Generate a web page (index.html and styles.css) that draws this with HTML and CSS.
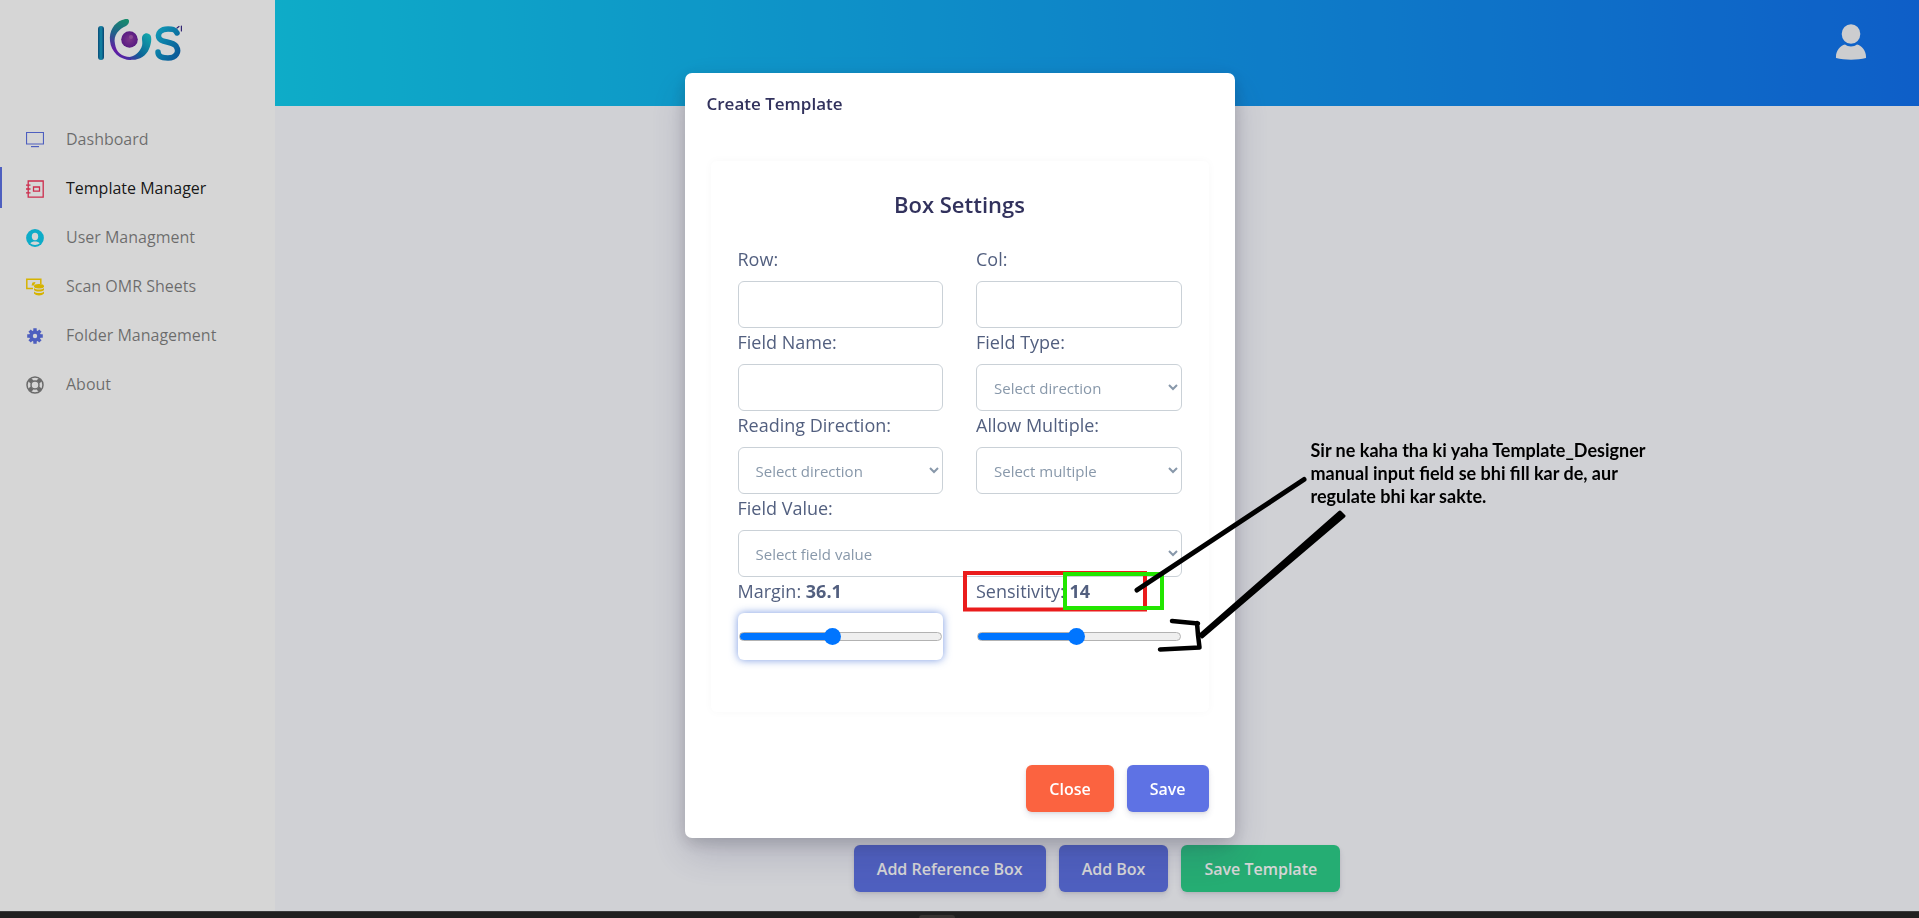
FILE: index.html
```html
<!DOCTYPE html>
<html lang="en">
<head>
<meta charset="utf-8">
<title>Template Manager</title>
<link rel="stylesheet" href="styles.css">
</head>
<body>
<div class="app">
  <aside class="sidebar">
    <a class="brand" href="#" aria-label="IOS home">
      <svg width="88" height="50" viewBox="0 0 88 50" fill="none" stroke-linecap="round">
        <defs>
          <linearGradient id="bar" x1="0" x2="1" y1="0" y2="0"><stop offset="0" stop-color="#0b5a8e"/><stop offset=".5" stop-color="#18a3c9"/><stop offset="1" stop-color="#0a4f86"/></linearGradient>
          <linearGradient id="ess" x1="0" x2="1" y1="0" y2="1"><stop offset="0" stop-color="#14b4d8"/><stop offset=".5" stop-color="#0e8ec4"/><stop offset="1" stop-color="#0d68b4"/></linearGradient>
          <linearGradient id="arcl" x1=".6" x2=".4" y1="0" y2="1"><stop offset="0" stop-color="#1ba682"/><stop offset=".4" stop-color="#2675a5"/><stop offset=".8" stop-color="#7820c4"/><stop offset="1" stop-color="#4b3cc4"/></linearGradient>
          <linearGradient id="arcr" x1="1" x2="0" y1="0" y2="1"><stop offset="0" stop-color="#17cfcf"/><stop offset=".6" stop-color="#0e78b4"/><stop offset="1" stop-color="#6a25c6"/></linearGradient>
          <radialGradient id="eye"><stop offset="0" stop-color="#9440a4"/><stop offset="1" stop-color="#6a209c"/></radialGradient>
        </defs>
        <rect x="4" y="11" width="6" height="34" rx="3" fill="url(#bar)"/>
        <path d="M35 6C35 3 31 4 28 5C20 8 15 16 16 26C17 37 26 45 37 45C38 44 37 42 36 42C28 42 22 37 21 29C19 20 25 14 32 11C35 9 35 7 35 6Z" fill="url(#arcl)"/>
        <path d="M49 20C46 24 51 28 46 35C42 41 36 43 30 42C38 48 51 44 55 34C58 27 58 20 55 19C53 18 51 18 49 20Z" fill="url(#arcr)"/>
        <circle cx="35.500" cy="24.500" r="8.300" fill="url(#eye)"/><circle cx="37" cy="22" r="2" fill="#a65ab0"/>
        <path d="M83 18C81 14 78 14 74 14C67 14 63 18 65 23C67 28 78 26 82 31C86 37 82 43 74 43C68 43 64 41 64 37" stroke="url(#ess)" stroke-width="5.500"/>
        <path d="M83 13l2-1.500M87.400 11v5" stroke="#3a2a88" stroke-width="1.200"/>
      </svg>
    </a>
    <nav>
      <ul class="menu">
        <li><a class="item" href="#"><svg class="ico indigo" viewBox="0 0 18 18"><path d="M.5 1.500h17v11.500H.5z" fill="none" stroke="currentColor" stroke-width="1.200"/><path d="M5 15h8v1.200H5z" fill="currentColor"/></svg>Dashboard</a></li>
        <li><a class="item active" href="#"><svg class="ico red" viewBox="0 0 18 18" fill="none" stroke="currentColor" stroke-width="1.300"><path d="M2.200 1h15v16.200h-15zM7.500 7h6v4.200h-6zM0 5.200h4.500M0 9h4.500M0 12.800h4.500"/></svg>Template Manager</a></li>
        <li><a class="item" href="#"><svg class="ico cyan" viewBox="0 0 18 18"><circle cx="9" cy="9" r="8.900" fill="currentColor"/><ellipse cx="9" cy="7.500" rx="3.200" ry="3.700" fill="#fff"/><path d="M4.300 14.200C6 11.800 12 11.800 13.700 14.200C11.500 16.500 6.500 16.500 4.300 14.200Z" fill="#fff"/></svg>User Managment</a></li>
        <li><a class="item" href="#"><svg class="ico yellow" viewBox="0 0 18 18"><path d="M7 10.500H.8V1.200h14V6" fill="none" stroke="currentColor" stroke-width="1.500"/><path d="M5.500 7.500L6.500 4.500L9.500 4L8 7.500Z" fill="currentColor"/><ellipse cx="13" cy="8.200" rx="5" ry="2.200" fill="currentColor"/><path d="M8 10c2 2 8 2 10 0v2c-2 2-8 2-10 0zM8 13.500c2 2 8 2 10 0v2c-2 2.500-8 2.500-10 0z" fill="currentColor"/></svg>Scan OMR Sheets</a></li>
        <li><a class="item" href="#"><svg class="ico indigo" viewBox="0 0 18 18"><g stroke="currentColor" stroke-width="3.400"><path d="M9 1.200v15.600M1.200 9h15.600M3.600 3.600l10.800 10.800M14.400 3.600L3.600 14.400"/></g><circle cx="9" cy="9" r="5.800" fill="currentColor"/><circle cx="9" cy="9" r="2.200" fill="#fff"/></svg>Folder Management</a></li>
        <li><a class="item" href="#"><svg class="ico gray" viewBox="0 0 18 18" fill="none" stroke="currentColor"><circle cx="9" cy="9" r="8" stroke-width="1.500"/><circle cx="9" cy="9" r="4" stroke-width="1.500"/><path d="M3.400 3.400l2.700 2.700M14.600 3.400l-2.700 2.700M3.400 14.600l2.700-2.700M14.600 14.600l-2.700-2.700" stroke-width="4.200"/></svg>About</a></li>
      </ul>
    </nav>
  </aside>
  <main class="main">
    <header class="header">
      <button class="avatar" type="button" aria-label="Account">
        <svg width="32" height="36" viewBox="0 0 32 36" fill="#f4f5f7"><ellipse cx="16" cy="10" rx="9.300" ry="9.800"/><path d="M10 20.500C13 23 19 23 22 20.500C27 21.500 31.500 27 31 34C22 36.300 10 36.300 1 34C.5 27 5 21.500 10 20.500Z"/></svg>
      </button>
    </header>
    <div class="actions">
      <button class="btn primary" type="button">Add Reference Box</button>
      <button class="btn primary" type="button">Add Box</button>
      <button class="btn success" type="button">Save Template</button>
    </div>
  </main>
</div>
<div class="taskbar"><span class="tab"></span></div>

<div class="backdrop">
  <section class="modal" role="dialog" aria-labelledby="modal-title">
    <h1 class="modal-title" id="modal-title">Create Template</h1>
    <form class="card">
      <h2 class="card-title">Box Settings</h2>
      <div class="grid">
        <div class="field"><label for="row">Row:</label><input class="control" id="row" type="text"></div>
        <div class="field"><label for="col">Col:</label><input class="control" id="col" type="text"></div>
        <div class="field"><label for="name">Field Name:</label><input class="control" id="name" type="text"></div>
        <div class="field"><label for="type">Field Type:</label><select class="control" id="type"><option>Select direction</option></select></div>
        <div class="field"><label for="dir">Reading Direction:</label><select class="control" id="dir"><option>Select direction</option></select></div>
        <div class="field"><label for="multi">Allow Multiple:</label><select class="control" id="multi"><option>Select multiple</option></select></div>
        <div class="field wide"><label for="value">Field Value:</label><select class="control" id="value"><option>Select field value</option></select></div>
        <div class="field"><label for="margin">Margin: <b>36.1</b></label><div class="slider focused"><input id="margin" type="range" min="0" max="100" value="46" style="--fill:46%"></div></div>
        <div class="field"><label for="sens">Sensitivity: <b>14</b></label><div class="slider"><input id="sens" type="range" min="0" max="100" value="49" style="--fill:48%"></div></div>
      </div>
    </form>
    <footer class="modal-footer">
      <button class="btn danger" type="button">Close</button>
      <button class="btn primary" type="button">Save</button>
    </footer>
    <svg class="marks" viewBox="0 0 660 600" width="660" height="600" fill="none" stroke-linecap="round" stroke-linejoin="round" aria-hidden="true">
      <rect x="280" y="500" width="180" height="36.500" stroke="#ea1c1c" stroke-width="4" stroke-linejoin="miter"/>
      <rect x="380" y="501" width="97" height="34" stroke="#22e600" stroke-width="4" stroke-linejoin="miter"/>
      <path d="M619 406.500L452 517" stroke="#000" stroke-width="5"/>
      <path d="M655 439L659 443L517 564L515 562Z" fill="#000" stroke="#000" stroke-width="3"/>
      <path d="M487 548L513 550.500M512 550L513 562L514.500 574.500L475 576.500" stroke="#000" stroke-width="4.500"/>
    </svg>
    <p class="note">Sir ne kaha tha ki yaha Template_Designer<br>manual input field se bhi fill kar de, aur<br>regulate bhi kar sakte.</p>
  </section>
</div>
</body>
</html>
```
FILE: styles.css
```css
* { box-sizing: border-box; }

body {
  margin: 0;
  min-height: 100vh;
  display: flex;
  flex-direction: column;
  background: #f8f9fe;
  color: #525f7f;
  font: 400 16px/24px "Open Sans", sans-serif;
}

.app { flex: 1; display: flex; }

/* Sidebar */
.sidebar { width: 275px; flex: none; background: #fff; }
.brand { display: flex; justify-content: center; padding: 15px 0 53px; }
.menu { list-style: none; margin: 0; padding: 0; display: grid; gap: 8px; }
.item {
  display: flex;
  align-items: center;
  gap: 22px;
  height: 41px;
  padding-left: 24px;
  border-left: 2px solid transparent;
  color: rgba(0, 0, 0, .5);
  text-decoration: none;
}
.item.active { border-color: #5e72e4; color: rgba(0, 0, 0, .9); }
.ico { width: 18px; height: 18px; flex: none; margin-top: 3px; }
.indigo { color: #5e72e4; }
.red { color: #f5365c; }
.cyan { color: #11cdef; }
.yellow { color: #ffd600; }
.gray { color: #808080; }

/* Page */
.main { flex: 1; display: flex; flex-direction: column; }
.header {
  height: 106px;
  padding: 24px 52px;
  display: flex;
  justify-content: flex-end;
  align-items: flex-start;
  background: linear-gradient(87deg, #11cdef 0, #1171ef 100%);
}
.avatar { padding: 0; border: 0; background: none; line-height: 0; }
.actions { display: flex; justify-content: center; gap: 13px; margin-top: auto; padding-bottom: 19px; }
.taskbar {
  height: 7px;
  flex: none;
  display: flex;
  justify-content: center;
  align-items: flex-end;
  position: relative;
  z-index: 2;
  background: #212020;
  border-top: 1px solid #3c3b3c;
}
.tab { width: 36px; height: 3px; margin-right: 46px; border-radius: 3px 3px 0 0; background: #383432; }

.btn {
  height: 47px;
  padding: 0 23px;
  border: 0;
  border-radius: 6px;
  color: #fff;
  font: 600 16px/24px "Open Sans", sans-serif;
  box-shadow: 0 4px 6px rgba(50, 50, 93, .11), 0 1px 3px rgba(0, 0, 0, .08);
}
.primary { background: #5e72e4; }
.success { background: #2dce89; }
.danger { background: #fb6340; }

/* Modal */
.backdrop {
  position: fixed;
  inset: 0;
  display: flex;
  justify-content: center;
  align-items: flex-start;
  padding-top: 73px;
  background: rgba(0, 0, 0, .16);
}
.modal {
  position: relative;
  width: 550px;
  padding: 18px 26px 26px;
  border-radius: 7px;
  background: #fff;
  box-shadow: 0 16px 38px rgba(50, 50, 93, .2), 0 5px 16px rgba(0, 0, 0, .17);
}
.modal-title { margin: 0 -4px 44px; color: #32325d; font-size: 17px; line-height: 26px; font-weight: 600; }
.card { padding: 26px 27px 52px; border-radius: 6px; box-shadow: 0 0 10px rgba(0, 0, 0, .03); }
.card-title { margin: 0 0 24px; color: #32325d; font-size: 22px; line-height: 34px; font-weight: 600; text-align: center; }
.grid { display: grid; grid-template-columns: 1fr 1fr; column-gap: 33px; }
.field { display: flex; flex-direction: column; }
.field label { height: 36px; font-size: 18px; line-height: 29px; }
.field b { font-weight: 700; }
.wide { grid-column: 1 / -1; }
.control {
  width: 100%;
  height: 47px;
  padding: 0 13px;
  border: 1px solid #cad1d7;
  border-radius: 6px;
  background: #fff;
  color: #8898aa;
  font: 400 15px/24px "Open Sans", sans-serif;
}
.slider { height: 47px; display: flex; align-items: center; padding: 0 1px; border-radius: 6px; }
.focused { box-shadow: 0 0 9px rgba(50, 100, 210, .65); }
.slider input {
  appearance: none;
  width: 100%;
  height: 9px;
  margin: 0;
  border: 1px solid #b2b2b2;
  border-radius: 5px;
  background: linear-gradient(to right, #0075ff var(--fill), #efefef var(--fill)) border-box;
}
.slider input::-webkit-slider-thumb {
  appearance: none;
  width: 17px;
  height: 17px;
  border-radius: 50%;
  background: #0075ff;
}
.modal-footer { display: flex; justify-content: flex-end; gap: 13px; margin-top: 53px; }

/* Annotations drawn over the dialog */
.marks { position: absolute; left: 0; top: 0; pointer-events: none; overflow: visible; }
.note {
  position: absolute;
  left: 626px;
  top: 366px;
  margin: 0;
  color: #000;
  font: 700 18px/23px Lato, sans-serif;
  white-space: nowrap;
}
```
